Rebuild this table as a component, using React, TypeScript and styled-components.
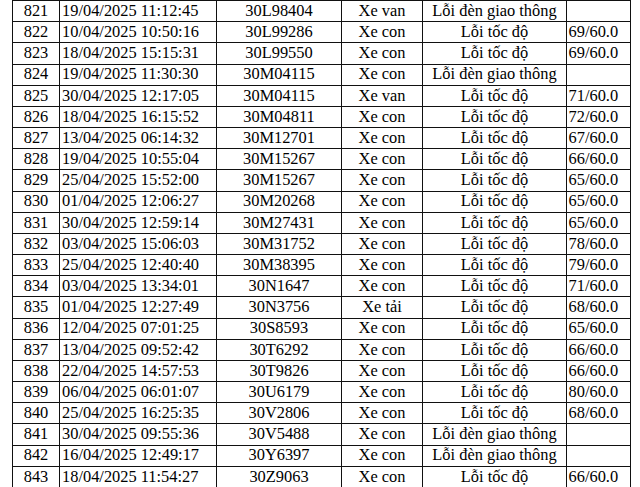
import React from "react";
import styled, { createGlobalStyle } from "styled-components";

const Global = createGlobalStyle`
  html, body { margin: 0; padding: 0; background: #ffffff; }
  body { font-family: "Liberation Serif", "Times New Roman", serif; color: #000; }
`;

type Row = [string, string, string, string, string, string];

const rows: Row[] = [
  ["821", "19/04/2025 11:12:45", "30L98404", "Xe van", "Lỗi đèn giao thông", ""],
  ["822", "10/04/2025 10:50:16", "30L99286", "Xe con", "Lỗi tốc độ", "69/60.0"],
  ["823", "18/04/2025 15:15:31", "30L99550", "Xe con", "Lỗi tốc độ", "69/60.0"],
  ["824", "19/04/2025 11:30:30", "30M04115", "Xe con", "Lỗi đèn giao thông", ""],
  ["825", "30/04/2025 12:17:05", "30M04115", "Xe van", "Lỗi tốc độ", "71/60.0"],
  ["826", "18/04/2025 16:15:52", "30M04811", "Xe con", "Lỗi tốc độ", "72/60.0"],
  ["827", "13/04/2025 06:14:32", "30M12701", "Xe con", "Lỗi tốc độ", "67/60.0"],
  ["828", "19/04/2025 10:55:04", "30M15267", "Xe con", "Lỗi tốc độ", "66/60.0"],
  ["829", "25/04/2025 15:52:00", "30M15267", "Xe con", "Lỗi tốc độ", "65/60.0"],
  ["830", "01/04/2025 12:06:27", "30M20268", "Xe con", "Lỗi tốc độ", "65/60.0"],
  ["831", "30/04/2025 12:59:14", "30M27431", "Xe con", "Lỗi tốc độ", "65/60.0"],
  ["832", "03/04/2025 15:06:03", "30M31752", "Xe con", "Lỗi tốc độ", "78/60.0"],
  ["833", "25/04/2025 12:40:40", "30M38395", "Xe con", "Lỗi tốc độ", "79/60.0"],
  ["834", "03/04/2025 13:34:01", "30N1647", "Xe con", "Lỗi tốc độ", "71/60.0"],
  ["835", "01/04/2025 12:27:49", "30N3756", "Xe tải", "Lỗi tốc độ", "68/60.0"],
  ["836", "12/04/2025 07:01:25", "30S8593", "Xe con", "Lỗi tốc độ", "65/60.0"],
  ["837", "13/04/2025 09:52:42", "30T6292", "Xe con", "Lỗi tốc độ", "66/60.0"],
  ["838", "22/04/2025 14:57:53", "30T9826", "Xe con", "Lỗi tốc độ", "66/60.0"],
  ["839", "06/04/2025 06:01:07", "30U6179", "Xe con", "Lỗi tốc độ", "80/60.0"],
  ["840", "25/04/2025 16:25:35", "30V2806", "Xe con", "Lỗi tốc độ", "68/60.0"],
  ["841", "30/04/2025 09:55:36", "30V5488", "Xe con", "Lỗi đèn giao thông", ""],
  ["842", "16/04/2025 12:49:17", "30Y6397", "Xe con", "Lỗi đèn giao thông", ""],
  ["843", "18/04/2025 11:54:27", "30Z9063", "Xe con", "Lỗi tốc độ", "66/60.0"],
];

const Page = styled.div`
  width: 640px;
  height: 487px;
  overflow: hidden;
  padding-left: 12px;
  box-sizing: border-box;
`;

const Grid = styled.div`
  display: grid;
  grid-template-columns: 46px 156px 124px 80px 143px 63px;
  grid-auto-rows: 20.18px;
  gap: 1px;
  padding: 1px;
  width: max-content;
  background: #111;
`;

type Align = "left" | "center";

const Cell = styled.div<{ $align: Align; $pad: number }>`
  background: #fff;
  display: flex;
  align-items: center;
  justify-content: ${(p) => (p.$align === "left" ? "flex-start" : "center")};
  padding-left: ${(p) => p.$pad}px;
  font-size: 16.4px;
  line-height: 1;
  white-space: nowrap;
  overflow: hidden;
  color: #000;
`;

const aligns: Align[] = ["center", "left", "center", "center", "center", "left"];
const pads = [0, 2, 0, 0, 0, 1.5];

export default function App() {
  return (
    <>
      <Global />
      <Page>
        <Grid>
          {rows.map((r) =>
            r.map((v, i) => (
              <Cell key={r[0] + "-" + i} $align={aligns[i]} $pad={pads[i]}>
                {v}
              </Cell>
            ))
          )}
        </Grid>
      </Page>
    </>
  );
}
